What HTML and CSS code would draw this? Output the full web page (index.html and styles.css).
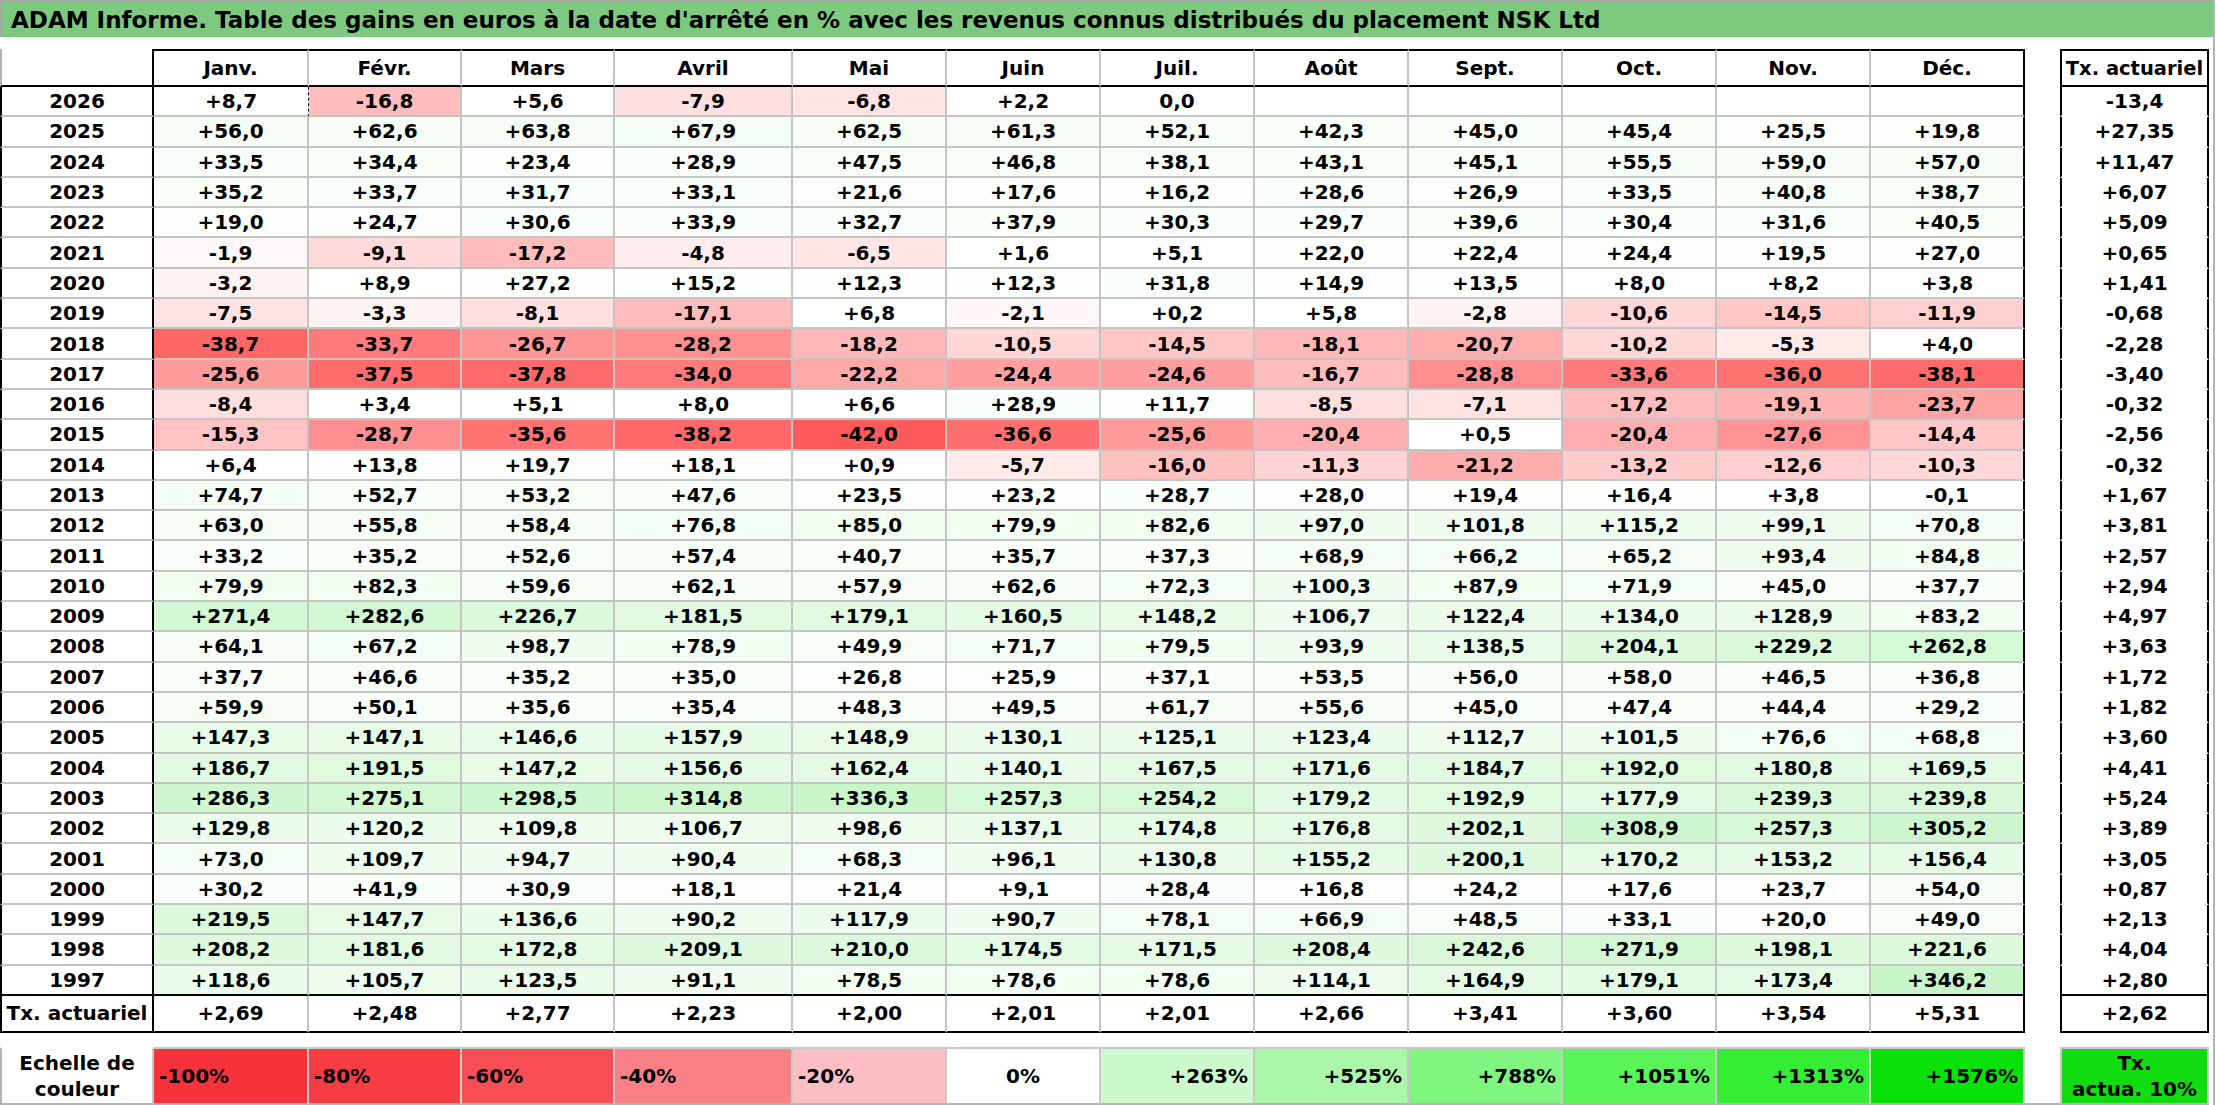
FILE: index.html
```html
<!DOCTYPE html>
<html lang="fr">
<head>
<meta charset="utf-8">
<title>ADAM Informe</title>
<link rel="stylesheet" href="styles.css">
</head>
<body>
<div class="sheet">
  <div class="title">ADAM Informe. Table des gains en euros à la date d'arrêté en % avec les revenus connus distribués du placement NSK Ltd</div>
  <div class="grid" id="grid">
    <div class="cell yh"></div>
    <div class="cell mh">Janv.</div>
    <div class="cell mh">Févr.</div>
    <div class="cell mh">Mars</div>
    <div class="cell mh">Avril</div>
    <div class="cell mh">Mai</div>
    <div class="cell mh">Juin</div>
    <div class="cell mh">Juil.</div>
    <div class="cell mh">Août</div>
    <div class="cell mh">Sept.</div>
    <div class="cell mh">Oct.</div>
    <div class="cell mh">Nov.</div>
    <div class="cell mh end">Déc.</div>
    <div class="gap"></div>
    <div class="cell th">Tx. actuariel</div>
  </div>
  <div class="legend">
    <div class="lc ly">Echelle de<br>couleur</div>
    <div class="lc neg s100">-100%</div>
    <div class="lc neg s80">-80%</div>
    <div class="lc neg s60">-60%</div>
    <div class="lc neg s40">-40%</div>
    <div class="lc neg s20">-20%</div>
    <div class="lc zero">0%</div>
    <div class="lc pos p1">+263%</div>
    <div class="lc pos p2">+525%</div>
    <div class="lc pos p3">+788%</div>
    <div class="lc pos p4">+1051%</div>
    <div class="lc pos p5">+1313%</div>
    <div class="lc pos p6">+1576%</div>
    <div class="lgap"></div>
    <div class="lc ltx">Tx.<br>actua. 10%</div>
  </div>
</div>
<script src="script.js"></script>
</body>
</html>
```

FILE: styles.css
```css
html, body {
  margin: 0;
  padding: 0;
  background: #ffffff;
}

.sheet {
  width: 2215px;
  height: 1105px;
  box-sizing: border-box;
  border-right: 2px solid #b4b4b4;
  font-family: "DejaVu Sans", "Liberation Sans", sans-serif;
  font-weight: bold;
  color: #000;
  overflow: hidden;
}

.title {
  height: 37px;
  box-sizing: border-box;
  background: #7dc97f;
  border-top: 2px solid #a6a6a6;
  border-left: 2px solid #a6a6a6;
  padding-left: 9px;
  font-size: 23px;
  line-height: 36px;
  white-space: nowrap;
}

.grid,
.legend {
  display: grid;
  grid-template-columns: 154px 155px 153px 153px 178px repeat(8, 154px) 35px 149px;
}

.grid {
  margin-top: 12px;
  grid-template-rows: 38px repeat(30, 30.3px) 37px;
}

.cell {
  box-sizing: border-box;
  display: flex;
  align-items: center;
  justify-content: center;
  border-right: 2px solid #c4c4c4;
  border-bottom: 2px solid #c4c4c4;
  font-size: 20px;
  white-space: nowrap;
  overflow: hidden;
}

.yh {
  border-left: 2px solid #b4b4b4;
  border-right-color: #000;
  border-bottom-color: #000;
}

.mh {
  border-top: 2px solid #000;
  border-bottom-color: #000;
}

.end {
  border-right-color: #000;
}

.gap {
  background: #fff;
}

.th {
  border: 2px solid #000;
  font-size: 19.5px;
}

.yr {
  border-left: 2px solid #000;
  border-right-color: #000;
}

.tv {
  border-left: 2px solid #000;
  border-right-color: #000;
  border-bottom-color: transparent;
}

.last {
  border-bottom-color: #000;
}

.tot {
  border-bottom-color: #000;
}

.dash {
  border-right: 1px dashed #000;
}

.legend {
  margin-top: 14px;
  height: 58px;
}

.lc {
  box-sizing: border-box;
  display: flex;
  align-items: center;
  border-top: 2px solid #c8c8c8;
  border-right: 2px solid #c8c8c8;
  border-bottom: 2px solid #b4b4b4;
  font-size: 20px;
  line-height: 26px;
  white-space: nowrap;
}

.ly {
  border-top-color: transparent;
  border-left: 2px solid #b4b4b4;
  justify-content: center;
  text-align: center;
}

.lgap {
  border-bottom: 2px solid #b4b4b4;
}

.neg {
  justify-content: flex-start;
  padding-left: 5px;
}

.zero {
  justify-content: center;
  background: #ffffff;
}

.pos {
  justify-content: flex-end;
  padding-right: 5px;
}

.s100 { background: #f7323b; }
.s80 { background: #f83c44; }
.s60 { background: #f84e56; }
.s40 { background: #f98086; }
.s20 { background: #fcbec2; }
.p1 { background: #ccfacc; }
.p2 { background: #aaf7aa; }
.p3 { background: #80f680; }
.p4 { background: #58f458; }
.p5 { background: #34ee34; }
.p6 { background: #08e208; }

.ltx {
  background: #10dc10;
  justify-content: center;
  text-align: center;
  border-left: 2px solid #c8c8c8;
}
```

FILE: script.js
```js
(function () {
  var rows = [
    ["2026","+8,7","-16,8","+5,6","-7,9","-6,8","+2,2","0,0","","","","","","-13,4"],
    ["2025","+56,0","+62,6","+63,8","+67,9","+62,5","+61,3","+52,1","+42,3","+45,0","+45,4","+25,5","+19,8","+27,35"],
    ["2024","+33,5","+34,4","+23,4","+28,9","+47,5","+46,8","+38,1","+43,1","+45,1","+55,5","+59,0","+57,0","+11,47"],
    ["2023","+35,2","+33,7","+31,7","+33,1","+21,6","+17,6","+16,2","+28,6","+26,9","+33,5","+40,8","+38,7","+6,07"],
    ["2022","+19,0","+24,7","+30,6","+33,9","+32,7","+37,9","+30,3","+29,7","+39,6","+30,4","+31,6","+40,5","+5,09"],
    ["2021","-1,9","-9,1","-17,2","-4,8","-6,5","+1,6","+5,1","+22,0","+22,4","+24,4","+19,5","+27,0","+0,65"],
    ["2020","-3,2","+8,9","+27,2","+15,2","+12,3","+12,3","+31,8","+14,9","+13,5","+8,0","+8,2","+3,8","+1,41"],
    ["2019","-7,5","-3,3","-8,1","-17,1","+6,8","-2,1","+0,2","+5,8","-2,8","-10,6","-14,5","-11,9","-0,68"],
    ["2018","-38,7","-33,7","-26,7","-28,2","-18,2","-10,5","-14,5","-18,1","-20,7","-10,2","-5,3","+4,0","-2,28"],
    ["2017","-25,6","-37,5","-37,8","-34,0","-22,2","-24,4","-24,6","-16,7","-28,8","-33,6","-36,0","-38,1","-3,40"],
    ["2016","-8,4","+3,4","+5,1","+8,0","+6,6","+28,9","+11,7","-8,5","-7,1","-17,2","-19,1","-23,7","-0,32"],
    ["2015","-15,3","-28,7","-35,6","-38,2","-42,0","-36,6","-25,6","-20,4","+0,5","-20,4","-27,6","-14,4","-2,56"],
    ["2014","+6,4","+13,8","+19,7","+18,1","+0,9","-5,7","-16,0","-11,3","-21,2","-13,2","-12,6","-10,3","-0,32"],
    ["2013","+74,7","+52,7","+53,2","+47,6","+23,5","+23,2","+28,7","+28,0","+19,4","+16,4","+3,8","-0,1","+1,67"],
    ["2012","+63,0","+55,8","+58,4","+76,8","+85,0","+79,9","+82,6","+97,0","+101,8","+115,2","+99,1","+70,8","+3,81"],
    ["2011","+33,2","+35,2","+52,6","+57,4","+40,7","+35,7","+37,3","+68,9","+66,2","+65,2","+93,4","+84,8","+2,57"],
    ["2010","+79,9","+82,3","+59,6","+62,1","+57,9","+62,6","+72,3","+100,3","+87,9","+71,9","+45,0","+37,7","+2,94"],
    ["2009","+271,4","+282,6","+226,7","+181,5","+179,1","+160,5","+148,2","+106,7","+122,4","+134,0","+128,9","+83,2","+4,97"],
    ["2008","+64,1","+67,2","+98,7","+78,9","+49,9","+71,7","+79,5","+93,9","+138,5","+204,1","+229,2","+262,8","+3,63"],
    ["2007","+37,7","+46,6","+35,2","+35,0","+26,8","+25,9","+37,1","+53,5","+56,0","+58,0","+46,5","+36,8","+1,72"],
    ["2006","+59,9","+50,1","+35,6","+35,4","+48,3","+49,5","+61,7","+55,6","+45,0","+47,4","+44,4","+29,2","+1,82"],
    ["2005","+147,3","+147,1","+146,6","+157,9","+148,9","+130,1","+125,1","+123,4","+112,7","+101,5","+76,6","+68,8","+3,60"],
    ["2004","+186,7","+191,5","+147,2","+156,6","+162,4","+140,1","+167,5","+171,6","+184,7","+192,0","+180,8","+169,5","+4,41"],
    ["2003","+286,3","+275,1","+298,5","+314,8","+336,3","+257,3","+254,2","+179,2","+192,9","+177,9","+239,3","+239,8","+5,24"],
    ["2002","+129,8","+120,2","+109,8","+106,7","+98,6","+137,1","+174,8","+176,8","+202,1","+308,9","+257,3","+305,2","+3,89"],
    ["2001","+73,0","+109,7","+94,7","+90,4","+68,3","+96,1","+130,8","+155,2","+200,1","+170,2","+153,2","+156,4","+3,05"],
    ["2000","+30,2","+41,9","+30,9","+18,1","+21,4","+9,1","+28,4","+16,8","+24,2","+17,6","+23,7","+54,0","+0,87"],
    ["1999","+219,5","+147,7","+136,6","+90,2","+117,9","+90,7","+78,1","+66,9","+48,5","+33,1","+20,0","+49,0","+2,13"],
    ["1998","+208,2","+181,6","+172,8","+209,1","+210,0","+174,5","+171,5","+208,4","+242,6","+271,9","+198,1","+221,6","+4,04"],
    ["1997","+118,6","+105,7","+123,5","+91,1","+78,5","+78,6","+78,6","+114,1","+164,9","+179,1","+173,4","+346,2","+2,80"],
    ["Tx. actuariel","+2,69","+2,48","+2,77","+2,23","+2,00","+2,01","+2,01","+2,66","+3,41","+3,60","+3,54","+5,31","+2,62"]
  ];

  function bg(s) {
    if (!s) return "";
    var v = parseFloat(s.replace(",", "."));
    if (v < 0) {
      var t = Math.min(-v / 65, 1);
      var g = Math.round(255 * (1 - t));
      return "rgb(255," + g + "," + g + ")";
    }
    if (v > 0) {
      var r = Math.max(0, Math.round(255 - 0.16 * v));
      var gg = Math.round(255 - 0.028 * v);
      return "rgb(" + r + "," + gg + "," + r + ")";
    }
    return "";
  }

  var grid = document.getElementById("grid");
  var frag = document.createDocumentFragment();

  rows.forEach(function (row, ri) {
    var isTot = ri === rows.length - 1;
    var isLast = ri === rows.length - 2;
    var mod = isTot ? " tot" : (isLast ? " last" : "");

    var y = document.createElement("div");
    y.className = "cell yr" + mod;
    y.textContent = row[0];
    frag.appendChild(y);

    for (var m = 1; m <= 12; m++) {
      var c = document.createElement("div");
      c.className = "cell m" + (m === 12 ? " end" : "") + mod;
      if (ri === 0 && m === 1) c.className += " dash";
      c.textContent = row[m];
      if (!isTot) {
        var col = bg(row[m]);
        if (col) c.style.background = col;
      }
      frag.appendChild(c);
    }

    var gap = document.createElement("div");
    gap.className = "gap";
    frag.appendChild(gap);

    var t = document.createElement("div");
    t.className = "cell tv" + mod;
    t.textContent = row[13];
    frag.appendChild(t);
  });

  grid.appendChild(frag);
})();
```
